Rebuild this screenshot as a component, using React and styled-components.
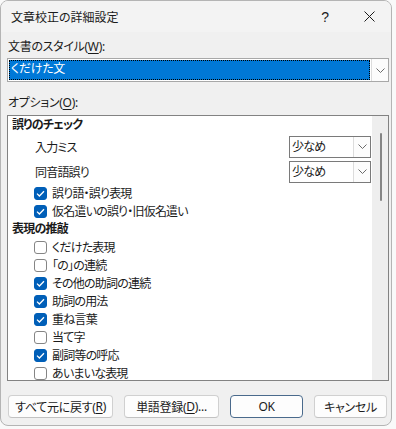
import React from 'react';
import styled, { createGlobalStyle } from 'styled-components';

const GlobalStyle = createGlobalStyle`
  html, body {
    margin: 0;
    padding: 0;
    background: #f9f9f9;
  }
  body {
    font-family: 'Noto Sans', 'Noto Sans CJK JP', sans-serif;
    font-size: 12px;
    color: #1b1b1b;
    letter-spacing: -0.3px;
    font-feature-settings: 'palt' 1;
  }
  * {
    box-sizing: border-box;
  }
`;

const SECTIONS = [
  {
    title: '誤りのチェック',
    items: [
      { type: 'select', label: '入力ミス', value: '少なめ' },
      { type: 'select', label: '同音語誤り', value: '少なめ' },
      { type: 'check', label: '誤り語・誤り表現', checked: true },
      { type: 'check', label: '仮名遣いの誤り・旧仮名遣い', checked: true },
    ],
  },
  {
    title: '表現の推敲',
    items: [
      { type: 'check', label: 'くだけた表現', checked: false },
      { type: 'check', label: '「の」の連続', checked: false },
      { type: 'check', label: 'その他の助詞の連続', checked: true },
      { type: 'check', label: '助詞の用法', checked: true },
      { type: 'check', label: '重ね言葉', checked: true },
      { type: 'check', label: '当て字', checked: false },
      { type: 'check', label: '副詞等の呼応', checked: true },
      { type: 'check', label: 'あいまいな表現', checked: false },
    ],
  },
];

function Chevron() {
  return (
    <svg width="9" height="5" viewBox="0 0 9 5">
      <path d="M0.5 0.5 L4.5 4.5 L8.5 0.5" fill="none" stroke="#6b6b6b" strokeWidth="1" />
    </svg>
  );
}

function CheckMark() {
  return (
    <svg width="9" height="7" viewBox="0 0 9 7">
      <path d="M1 3.6 L3.4 6 L8 1.2" fill="none" stroke="#fff" strokeWidth="1.3" />
    </svg>
  );
}

function OptionRow({ item }) {
  if (item.type === 'select') {
    return (
      <SelectRow>
        <span>{item.label}</span>
        <SmallSelect>
          <SmallValue>{item.value}</SmallValue>
          <ArrowBox>
            <Chevron />
          </ArrowBox>
        </SmallSelect>
      </SelectRow>
    );
  }
  return (
    <CheckRow>
      <Box checked={item.checked}>{item.checked && <CheckMark />}</Box>
      <span>{item.label}</span>
    </CheckRow>
  );
}

export default function App() {
  return (
    <>
      <GlobalStyle />
      <Window>
        <TitleBar>
          <Title>文章校正の詳細設定</Title>
          <CaptionButton>?</CaptionButton>
          <CaptionButton>
            <svg width="11" height="11" viewBox="0 0 11 11">
              <path d="M0.5 0.5 L10.5 10.5 M10.5 0.5 L0.5 10.5" stroke="#1b1b1b" strokeWidth="1" />
            </svg>
          </CaptionButton>
        </TitleBar>
        <Body>
          <FieldLabel>
            文書のスタイル(<u>W</u>):
          </FieldLabel>
          <StyleSelect>
            <Highlight>くだけた文</Highlight>
            <ArrowBox>
              <Chevron />
            </ArrowBox>
          </StyleSelect>
          <FieldLabel spaced>
            オプション(<u>O</u>):
          </FieldLabel>
          <ListBox>
            <ListContent>
              {SECTIONS.map((section) => (
                <React.Fragment key={section.title}>
                  <SectionTitle>{section.title}</SectionTitle>
                  {section.items.map((item) => (
                    <OptionRow key={item.label} item={item} />
                  ))}
                </React.Fragment>
              ))}
            </ListContent>
            <ScrollTrack>
              <ScrollThumb />
            </ScrollTrack>
          </ListBox>
          <Footer>
            <Button width={105}>
              すべて元に戻す(<u>R</u>)
            </Button>
            <Button width={95}>
              単語登録(<u>D</u>)...
            </Button>
            <Button width={73} primary>
              OK
            </Button>
            <Button width={73}>キャンセル</Button>
          </Footer>
        </Body>
      </Window>
    </>
  );
}

const Window = styled.div`
  width: 392px;
  height: 426px;
  border: 1px solid #b4b4b4;
  border-radius: 8px;
  background: #f0f0f0;
  overflow: hidden;
  display: flex;
  flex-direction: column;
`;

const TitleBar = styled.div`
  height: 31px;
  display: flex;
  align-items: center;
  padding-left: 10px;
  background: #f3f3f3;
`;

const Title = styled.div`
  flex: 1;
  font-size: 12px;
  letter-spacing: 0;
  padding-top: 1px;
`;

const CaptionButton = styled.div`
  width: 44px;
  height: 31px;
  display: flex;
  align-items: center;
  justify-content: center;
  font-family: 'Liberation Sans', sans-serif;
  font-size: 14px;
`;

const Body = styled.div`
  flex: 1;
  display: flex;
  flex-direction: column;
  padding: 0 2px 0 6px;
`;

const FieldLabel = styled.div`
  height: 16px;
  line-height: 16px;
  margin-top: ${(p) => (p.spaced ? '13px' : '7px')};
  padding-left: 1px;

  u {
    text-underline-offset: 2px;
  }
`;

const StyleSelect = styled.div`
  margin-top: 3px;
  height: 24px;
  display: flex;
  border: 1px solid #a8a8a8;
  background: #fff;
`;

const Highlight = styled.div`
  flex: 1;
  margin: 1px;
  padding-left: 2px;
  background: #0078d7;
  color: #fff;
  line-height: 18px;
  outline: 1px dotted #000;
  outline-offset: -1px;
`;

const ArrowBox = styled.div`
  width: 17px;
  display: flex;
  align-items: center;
  justify-content: center;
  border-left: 1px solid #dcdcdc;
  background: #fcfcfc;
`;

const ListBox = styled.div`
  margin-top: 4px;
  height: 266px;
  display: flex;
  border: 1px solid #828282;
  background: #fff;
  overflow: hidden;
`;

const ListContent = styled.div`
  flex: 1;
  padding: 0 1px 0 4px;
  letter-spacing: -0.8px;
`;

const SectionTitle = styled.div`
  height: 18px;
  line-height: 18px;
  font-weight: 700;
`;

const SelectRow = styled.div`
  height: 25px;
  display: flex;
  align-items: center;
  justify-content: space-between;
  padding-left: 23px;
`;

const SmallSelect = styled.div`
  width: 82px;
  height: 22px;
  display: flex;
  border: 1px solid #7a7a7a;
  background: #fff;
`;

const SmallValue = styled.div`
  flex: 1;
  padding-left: 2px;
  line-height: 20px;
`;

const CheckRow = styled.div`
  height: 18px;
  display: flex;
  align-items: center;
  gap: 5px;
  padding-left: 22px;
`;

const Box = styled.div`
  width: 13px;
  height: 13px;
  border-radius: 3px;
  display: flex;
  align-items: center;
  justify-content: center;
  background: ${(p) => (p.checked ? '#005fb8' : '#fff')};
  border: 1px solid ${(p) => (p.checked ? '#005fb8' : '#858585')};
`;

const ScrollTrack = styled.div`
  width: 16px;
  background: #eeeeee;
  padding-top: 17px;
  display: flex;
  justify-content: center;
`;

const ScrollThumb = styled.div`
  width: 2px;
  height: 68px;
  border-radius: 1px;
  background: #858585;
  margin-left: 1px;
`;

const Footer = styled.div`
  margin-top: 14px;
  display: flex;
  gap: 11px;
  padding-left: 1px;
`;

const Button = styled.div`
  width: ${(p) => p.width}px;
  height: 23px;
  display: flex;
  align-items: center;
  justify-content: center;
  border-radius: 4px;
  background: #fdfdfd;
  border: 1px solid ${(p) => (p.primary ? '#4a6a8c' : '#d0d0d0')};
  border-bottom-color: ${(p) => (p.primary ? '#4a6a8c' : '#c2c2c2')};

  u {
    text-underline-offset: 2px;
  }
`;
